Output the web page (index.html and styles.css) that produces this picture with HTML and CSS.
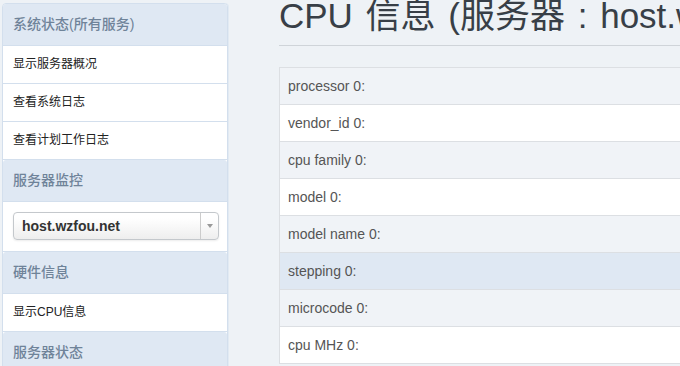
FILE: index.html
```html
<!DOCTYPE html>
<html lang="zh-CN">
<head>
    <meta charset="UTF-8">
    <meta name="viewport" content="width=device-width, initial-scale=1.0">
    <title>CPU 信息</title>
    <link rel="stylesheet" href="styles.css">
</head>
<body>
    <div class="layout">
        <aside class="sidebar">
            <div class="nav-header">系统状态(所有服务)</div>
            <a class="nav-item" href="#">显示服务器概况</a>
            <a class="nav-item" href="#">查看系统日志</a>
            <a class="nav-item" href="#">查看计划工作日志</a>

            <div class="nav-header">服务器监控</div>
            <div class="nav-select">
                <div class="select-box">
                    <span class="select-value">host.wzfou.net</span>
                    <span class="select-arrow"></span>
                </div>
            </div>

            <div class="nav-header">硬件信息</div>
            <a class="nav-item" href="#">显示CPU信息</a>

            <div class="nav-header">服务器状态</div>
        </aside>

        <main class="content">
            <h1 class="page-title">CPU 信息 (服务器 : host.wzfou.net)</h1>

            <table class="info-table">
                <tbody>
                    <tr><td>processor 0:</td><td></td></tr>
                    <tr><td>vendor_id 0:</td><td></td></tr>
                    <tr><td>cpu family 0:</td><td></td></tr>
                    <tr><td>model 0:</td><td></td></tr>
                    <tr><td>model name 0:</td><td></td></tr>
                    <tr class="hover"><td>stepping 0:</td><td></td></tr>
                    <tr><td>microcode 0:</td><td></td></tr>
                    <tr><td>cpu MHz 0:</td><td></td></tr>
                </tbody>
            </table>
        </main>
    </div>
</body>
</html>
```

FILE: styles.css
```css
:root {
    --bg-page: #eef2f6;
    --bg-stripe: #f0f3f7;
    --bg-header: #dfe8f3;
    --bg-hover: #dfe8f3;
    --text-primary: #333333;
    --text-title: #383f47;
    --text-row: #555555;
    --text-header: #6f8399;
    --border-nav: #d3dfed;
    --border-table: #dcdfe3;
}

html, body {
    margin: 0;
    padding: 0;
    overflow: hidden;
}

body {
    font-family: "Liberation Sans", Arial, "Noto Sans CJK SC", sans-serif;
    background: var(--bg-page);
    color: var(--text-primary);
}

.layout {
    display: flex;
    align-items: flex-start;
    width: 1200px;
}

.sidebar {
    width: 224px;
    margin: 3px 0 0 2px;
    background: #ffffff;
    border: 1px solid var(--border-nav);
    border-radius: 4px 4px 0 0;
    box-shadow: 1px 0 0 #e2eaf3;
    flex-shrink: 0;
}

.nav-header {
    height: 41px;
    line-height: 41px;
    padding-left: 10px;
    background: var(--bg-header);
    color: var(--text-header);
    font-size: 14px;
    font-weight: 500;
    border-radius: 3px 3px 0 0;
    border-bottom: 1px solid var(--border-nav);
}

.nav-item {
    display: block;
    height: 37px;
    line-height: 37px;
    padding-left: 10px;
    font-size: 12px;
    color: #222222;
    text-decoration: none;
    border-bottom: 1px solid var(--border-nav);
}

.nav-select {
    padding: 10px 8px 11px 10px;
    border-bottom: 1px solid var(--border-nav);
}

.select-box {
    display: flex;
    height: 26px;
    border: 1px solid #c4c8cc;
    border-radius: 4px;
    background: linear-gradient(#ffffff 20%, #eeeeee 100%);
    box-shadow: 0 1px 2px rgba(0, 0, 0, 0.08);
}

.select-value {
    flex: 1;
    padding-left: 8px;
    line-height: 26px;
    font-size: 14px;
    font-weight: bold;
    color: #333333;
}

.select-arrow {
    width: 17px;
    border-left: 1px solid #cccccc;
    position: relative;
}

.select-arrow::after {
    content: "";
    position: absolute;
    left: 6px;
    top: 11px;
    border-left: 3px solid transparent;
    border-right: 3px solid transparent;
    border-top: 4px solid #999999;
}

.content {
    margin-left: 51px;
    width: 900px;
}

.page-title {
    margin: 0;
    padding-bottom: 13px;
    font-size: 35px;
    font-weight: normal;
    line-height: 32px;
    word-spacing: 3px;
    color: var(--text-title);
    white-space: nowrap;
    border-bottom: 1px solid #cfd4d9;
}

.info-table {
    width: 100%;
    margin-top: 21px;
    border-collapse: collapse;
    background: #ffffff;
    border: 1px solid var(--border-table);
}

.info-table td {
    height: 20px;
    padding: 8px;
    font-size: 14px;
    line-height: 20px;
    color: var(--text-row);
    border-top: 1px solid var(--border-table);
}

.info-table td:first-child {
    width: 200px;
}

.info-table tr:nth-child(odd) td {
    background: var(--bg-stripe);
}

.info-table tr.hover td {
    background: var(--bg-hover);
}
```
